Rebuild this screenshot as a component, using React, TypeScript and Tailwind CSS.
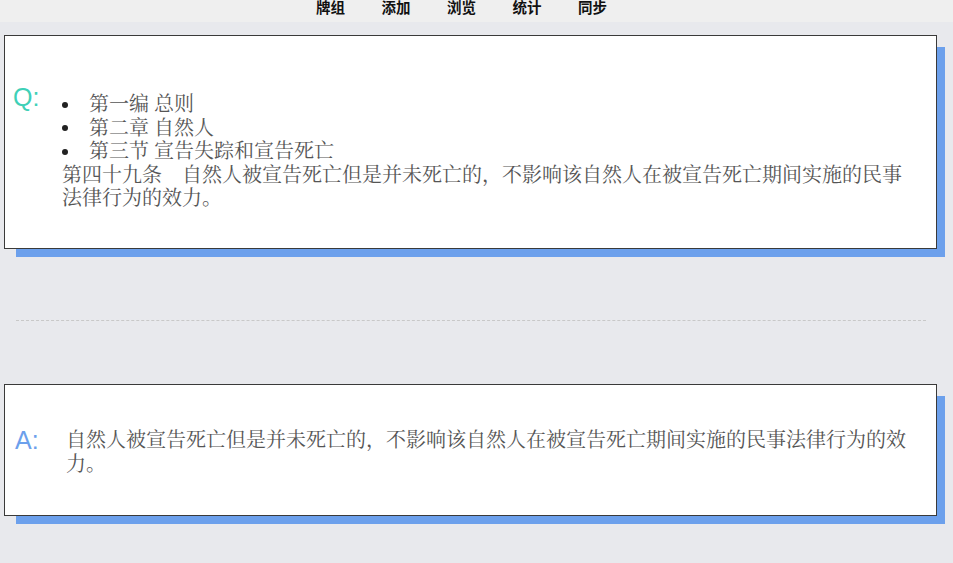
import React from 'react';

const navItems = ['牌组', '添加', '浏览', '统计', '同步'];

const sections = ['第一编 总则', '第二章 自然人', '第三节 宣告失踪和宣告死亡'];

const bodyFont = { fontFamily: '"Liberation Serif", "Noto Serif CJK SC", "Noto Sans CJK SC", serif' };

export default function App() {
  return (
    <div className="min-h-screen bg-[#e8e9ed]" style={bodyFont}>
      <nav className="flex h-[22px] gap-[36.5px] overflow-hidden bg-[#efefef] pl-[316px]">
        {navItems.map((item) => (
          <span
            key={item}
            className="-mt-[3px] text-[14.5px] font-bold leading-[20px] text-[#111]"
            style={{ fontFamily: '"Noto Sans CJK SC", sans-serif' }}
          >
            {item}
          </span>
        ))}
      </nav>

      {/* question card */}
      <section className="ml-[4px] mt-[13px] flex h-[214px] w-[933px] items-start border border-[#3a3a3a] bg-white pl-[8px] pt-[46px] shadow-[10px_10px_0_-2px_#6ca0ec]">
        <span className="w-[49px] text-[25px] leading-[30px] text-[#3fd0b7]" style={{ fontFamily: '"Liberation Sans", sans-serif' }}>
          Q:
        </span>
        <div className="mt-[11px] w-[850px] text-[20px] leading-[23.5px] text-[#555]">
          <ul>
            {sections.map((s) => (
              <li key={s} className="flex items-center">
                <span className="mr-[21px] h-[6px] w-[6px] rounded-full bg-[#222]" />
                {s}
              </li>
            ))}
          </ul>
          <p>第四十九条　自然人被宣告死亡但是并未死亡的，不影响该自然人在被宣告死亡期间实施的民事法律行为的效力。</p>
        </div>
      </section>

      <div className="ml-[16px] mt-[71px] w-[910px] border-t border-dashed border-[#c8c8c8]" />

      {/* answer card */}
      <section className="ml-[4px] mt-[63px] flex h-[132px] w-[933px] items-start border border-[#3a3a3a] bg-white pl-[10px] pt-[40px] shadow-[10px_10px_0_-2px_#6ca0ec]">
        <span className="w-[51px] text-[25px] leading-[30px] text-[#6ca0ec]" style={{ fontFamily: '"Liberation Sans", sans-serif' }}>
          A:
        </span>
        <p className="mt-[3px] w-[850px] text-[20px] leading-[24px] text-[#555]">
          自然人被宣告死亡但是并未死亡的，不影响该自然人在被宣告死亡期间实施的民事法律行为的效力。
        </p>
      </section>
    </div>
  );
}
